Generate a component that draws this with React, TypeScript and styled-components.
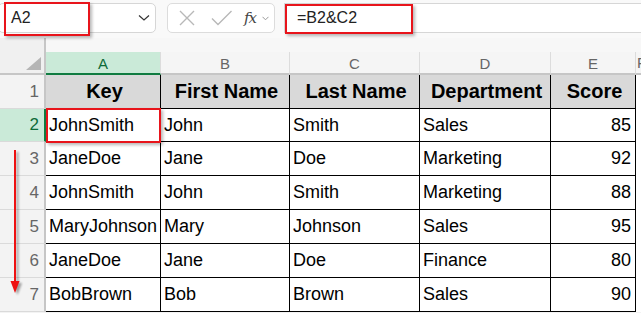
import React from "react";
import styled, { createGlobalStyle } from "styled-components";

const Global = createGlobalStyle`
  html, body { margin: 0; padding: 0; background: #ffffff; }
  body { font-family: "Liberation Sans", Arial, sans-serif; overflow: hidden; }
  * { box-sizing: border-box; }
`;

const Page = styled.div`
  width: 641px;
  height: 313px;
  position: relative;
  overflow: hidden;
  background: #f3f3f3;
`;

const FormulaBar = styled.div`
  height: 38px;
  display: flex;
  align-items: flex-start;
  padding-top: 3px;
  background: #f9f9f9;
`;

const NameBox = styled.div`
  position: relative;
  width: 158px;
  height: 30px;
  margin-left: -2px;
  background: #ffffff;
  border: 1px solid #d6d6d6;
  border-radius: 5px;
  display: flex;
  align-items: center;
  justify-content: space-between;
  padding: 0 5px 0 12px;
  font-size: 16px;
  color: #222;
`;

const FuncBox = styled.div`
  width: 108px;
  height: 30px;
  margin-left: 11px;
  background: #ffffff;
  border: 1px solid #dcdcdc;
  border-radius: 5px;
  display: flex;
  align-items: center;
  padding-left: 10px;
  gap: 0;
`;

const FxText = styled.span`
  font-family: "DejaVu Serif", "Liberation Serif", serif;
  font-style: italic;
  font-size: 15px;
  color: #444;
  margin-left: 11px;
  letter-spacing: -1px;
`;

const FormulaInput = styled.div`
  flex: 1;
  height: 30px;
  margin-left: 9px;
  background: #ffffff;
  border-top: 1px solid #d6d6d6;
  border-bottom: 1px solid #d6d6d6;
  border-left: 1px solid #d6d6d6;
  display: flex;
  align-items: center;
  padding-left: 12px;
  font-size: 16px;
  color: #222;
  position: relative;
`;

const Highlight = styled.div<{ $l: number; $t: number; $w: number; $h: number }>`
  position: absolute;
  left: ${(p) => p.$l}px;
  top: ${(p) => p.$t}px;
  width: ${(p) => p.$w}px;
  height: ${(p) => p.$h}px;
  border: 2px solid #e8141b;
  box-shadow: 2px 2px 3px rgba(0, 0, 0, 0.28);
  pointer-events: none;
`;

const Strip = styled.div`
  height: 14px;
  display: grid;
  grid-template-columns: 46px 1fr;
`;

const StripCorner = styled.div`
  background: #f0f0f0;
  border-right: 2px solid #c6c6c6;
`;

const StripRest = styled.div`
  background: #f7f7f7;
`;

const Sheet = styled.div`
  display: grid;
  grid-template-columns: 46px 115px 129px 130px 131px 85px 1fr;
  grid-template-rows: 23px 34px 33px 34px 34px 34px 34px 34px;
  background: #ffffff;
`;

const Corner = styled.div`
  background: #f0f0f0;
  border-right: 2px solid #c6c6c6;
  border-bottom: 2px solid #c6c6c6;
  position: relative;
`;

const CornerTriangle = styled.div`
  position: absolute;
  right: 3px;
  bottom: 3px;
  width: 0;
  height: 0;
  border-left: 15px solid transparent;
  border-bottom: 13px solid #b5b5b5;
`;

const ColHead = styled.div<{ $active?: boolean }>`
  background: ${(p) => (p.$active ? "#caead8" : "#f5f5f5")};
  border-right: 1px solid #dcdcdc;
  border-bottom: 2px solid ${(p) => (p.$active ? "#107c41" : "#c6c6c6")};
  color: ${(p) => (p.$active ? "#0e6b38" : "#666")};
  font-size: 15px;
  display: flex;
  align-items: center;
  justify-content: center;
  padding-top: 1px;
`;

const RowHead = styled.div<{ $active?: boolean }>`
  background: ${(p) => (p.$active ? "#caead8" : "#f3f3f3")};
  border-right: 2px solid ${(p) => (p.$active ? "#107c41" : "#c6c6c6")};
  border-bottom: 1px solid #dadada;
  color: ${(p) => (p.$active ? "#0e6b38" : "#666")};
  font-size: 17px;
  display: flex;
  align-items: center;
  justify-content: flex-end;
  padding-right: 5px;
`;

const Cell = styled.div<{ $head?: boolean; $num?: boolean }>`
  position: relative;
  background: ${(p) => (p.$head ? "#d9d9d9" : "#ffffff")};
  border-right: 1px solid #000;
  border-bottom: 1px solid #000;
  font-size: ${(p) => (p.$head ? "20px" : "18px")};
  font-weight: ${(p) => (p.$head ? 700 : 400)};
  color: #000;
  display: flex;
  align-items: center;
  justify-content: ${(p) => (p.$head ? "center" : p.$num ? "flex-end" : "flex-start")};
  padding: ${(p) => (p.$num ? "0 4px 0 0" : "0 0 0 3px")};
  white-space: nowrap;
`;

const Blank = styled.div<{ $head?: boolean }>`
  background: ${(p) => (p.$head ? "#f5f5f5" : "#ffffff")};
  border-bottom: ${(p) => (p.$head ? "2px solid #c6c6c6" : "none")};
  color: #666;
  font-size: 15px;
  display: flex;
  align-items: center;
  padding-left: 1px;
`;

const FillHandle = styled.div`
  position: absolute;
  right: -3px;
  bottom: -3px;
  width: 5px;
  height: 5px;
  background: #107c41;
  border: 1px solid #fff;
`;

const ArrowLayer = styled.svg`
  position: absolute;
  left: 0;
  top: 0;
  pointer-events: none;
`;

const Chevron = () => (
  <svg width="12" height="8" viewBox="0 0 12 8">
    <path d="M1 1.5 L6 6 L11 1.5" fill="none" stroke="#333" strokeWidth="1.2" />
  </svg>
);

const XIcon = () => (
  <svg width="18" height="16" viewBox="0 0 18 16">
    <path d="M2 1 L16 15 M16 1 L2 15" stroke="#b8b8b8" strokeWidth="1.4" fill="none" />
  </svg>
);

const CheckIcon = () => (
  <svg width="22" height="16" viewBox="0 0 22 16" style={{ marginLeft: 15 }}>
    <path d="M1 8.5 L7 14.5 L20.5 1" stroke="#b8b8b8" strokeWidth="1.4" fill="none" />
  </svg>
);

const SmallChevron = () => (
  <svg width="7" height="5" viewBox="0 0 7 5" style={{ marginLeft: 6 }}>
    <path d="M0.5 0.8 L3.5 3.8 L6.5 0.8" stroke="#999" strokeWidth="1" fill="none" />
  </svg>
);

const cols = ["A", "B", "C", "D", "E"];
const header = ["Key", "First Name", "Last Name", "Department", "Score"];
const rows: [string, string, string, string, number][] = [
  ["JohnSmith", "John", "Smith", "Sales", 85],
  ["JaneDoe", "Jane", "Doe", "Marketing", 92],
  ["JohnSmith", "John", "Smith", "Marketing", 88],
  ["MaryJohnson", "Mary", "Johnson", "Sales", 95],
  ["JaneDoe", "Jane", "Doe", "Finance", 80],
  ["BobBrown", "Bob", "Brown", "Sales", 90],
];

export default function App() {
  return (
    <>
      <Global />
      <Page>
        <FormulaBar>
          <NameBox>
            <span>A2</span>
            <Chevron />
          </NameBox>
          <FuncBox>
            <XIcon />
            <CheckIcon />
            <FxText>fx</FxText>
            <SmallChevron />
          </FuncBox>
          <FormulaInput>=B2&amp;C2</FormulaInput>
        </FormulaBar>
        <Strip>
          <StripCorner />
          <StripRest />
        </Strip>
        <Sheet>
          <Corner>
            <CornerTriangle />
          </Corner>
          {cols.map((c) => (
            <ColHead key={c} $active={c === "A"}>
              {c}
            </ColHead>
          ))}
          <Blank $head>F</Blank>

          <RowHead>1</RowHead>
          {header.map((h) => (
            <Cell key={h} $head>
              {h}
            </Cell>
          ))}
          <Blank />

          {rows.map((r, i) => (
            <React.Fragment key={i}>
              <RowHead $active={i === 0}>{i + 2}</RowHead>
              <Cell>
                {r[0]}
                {i === 0 && <FillHandle />}
              </Cell>
              <Cell>{r[1]}</Cell>
              <Cell>{r[2]}</Cell>
              <Cell>{r[3]}</Cell>
              <Cell $num>{r[4]}</Cell>
              <Blank />
            </React.Fragment>
          ))}
        </Sheet>

        <Highlight $l={4} $t={2} $w={86} $h={34} />
        <Highlight $l={285} $t={4} $w={128} $h={30} />
        <Highlight $l={46} $t={108} $w={115} $h={35} />

        <ArrowLayer width="40" height="313" viewBox="0 0 40 313">
          <defs>
            <filter id="sh" x="-50%" y="-10%" width="200%" height="120%">
              <feGaussianBlur stdDeviation="1.2" />
            </filter>
          </defs>
          <g transform="translate(2.5,2)" opacity="0.35" filter="url(#sh)">
            <rect x="14" y="150" width="2" height="132" fill="#000" />
            <path d="M10.5 281 L19.5 281 L15 293 Z" fill="#000" />
          </g>
          <rect x="14" y="150" width="2" height="132" fill="#ee1111" />
          <path d="M10.5 281 L19.5 281 L15 293 Z" fill="#ee1111" />
        </ArrowLayer>
      </Page>
    </>
  );
}
